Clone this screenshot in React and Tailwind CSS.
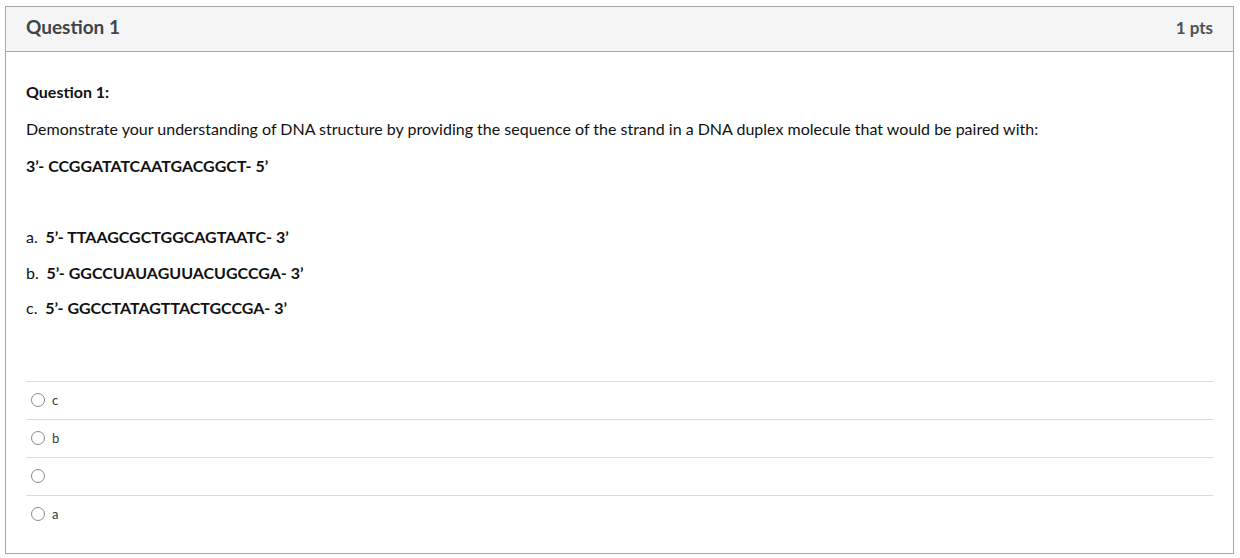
export default function App() {
  const answers = ["c", "b", "", "a"];
  return (
    <div className="w-[1240px] h-[558px] bg-white pt-[6px] pl-[5px]" style={{ fontFamily: "Lato, 'Liberation Sans', sans-serif" }}>
      <div className="w-[1229px] h-[548px] border border-[#a8a8a8] flex flex-col">
        <div className="h-[45px] bg-[#f5f5f5] border-b border-[#a8a8a8] flex items-center justify-between px-5 pb-[3px] text-[#3d454c]">
          <div className="text-[19px] font-bold">Question 1</div>
          <div className="text-[17px] font-bold text-[#4a5157]">1 pts</div>
        </div>
        <div className="px-5 pt-[28px] text-[16px] leading-[24px] text-[#111]">
          <p className="font-bold mb-[13px]">Question 1:</p>
          <p className="mb-[13px]">Demonstrate your understanding of DNA structure by providing the sequence of the strand in a DNA duplex molecule that would be paired with:</p>
          <p className="font-bold">3’- CCGGATATCAATGACGGCT- 5’</p>
          <p className="h-[24px] my-[11.5px]"></p>
          <p className="font-bold mb-[11.5px]"><span className="font-normal">a.</span>&nbsp; 5’- TTAAGCGCTGGCAGTAATC- 3’</p>
          <p className="font-bold mb-[11.5px]"><span className="font-normal">b.</span>&nbsp; 5’- GGCCUAUAGUUACUGCCGA- 3’</p>
          <p className="font-bold"><span className="font-normal">c.</span>&nbsp; 5’- GGCCTATAGTTACTGCCGA- 3’</p>
          <div className="mt-[61px]">
            {answers.map((a, i) => (
              <div key={i} className="h-[38px] border-t border-[#dcdcdc] flex items-center pl-[5px] pb-[2px]">
                <span className="w-[14px] h-[14px] rounded-full border border-[#8a8a8a] bg-white"></span>
                <span className="ml-[7px] text-[13px] text-[#2d3b45]">{a}</span>
              </div>
            ))}
          </div>
        </div>
      </div>
    </div>
  );
}
